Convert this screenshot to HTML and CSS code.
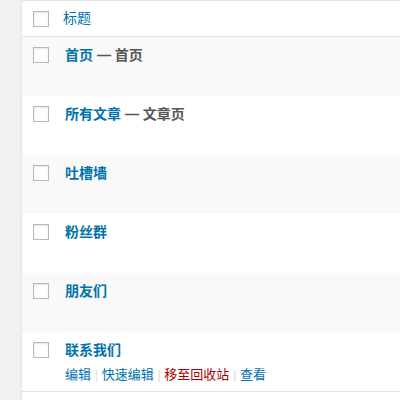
FILE: index.html
```html
<!DOCTYPE html>
<html lang="zh-CN">
<head>
<meta charset="utf-8">
<title>页面</title>
<link rel="stylesheet" href="styles.css">
</head>
<body>
<div class="page">
  <div class="gutter"></div>
  <div class="list">
    <div class="head">
      <div class="check"><input type="checkbox" class="cb"></div>
      <div class="title-col"><a class="sort">标题</a></div>
    </div>
    <div class="row alt">
      <div class="check"><input type="checkbox" class="cb"></div>
      <div class="cell"><strong class="rt"><a>首页</a> — 首页</strong></div>
    </div>
    <div class="row">
      <div class="check"><input type="checkbox" class="cb"></div>
      <div class="cell"><strong class="rt"><a>所有文章</a> — 文章页</strong></div>
    </div>
    <div class="row alt">
      <div class="check"><input type="checkbox" class="cb"></div>
      <div class="cell"><strong class="rt"><a>吐槽墙</a></strong></div>
    </div>
    <div class="row">
      <div class="check"><input type="checkbox" class="cb"></div>
      <div class="cell"><strong class="rt"><a>粉丝群</a></strong></div>
    </div>
    <div class="row alt">
      <div class="check"><input type="checkbox" class="cb"></div>
      <div class="cell"><strong class="rt"><a>朋友们</a></strong></div>
    </div>
    <div class="row">
      <div class="check"><input type="checkbox" class="cb"></div>
      <div class="cell">
        <strong class="rt"><a>联系我们</a></strong>
        <div class="actions"><a>编辑</a> | <a>快速编辑</a> | <a class="trash">移至回收站</a> | <a>查看</a></div>
      </div>
    </div>
    <div class="foot"></div>
  </div>
</div>
</body>
</html>
```
FILE: styles.css
```css
html, body {
  margin: 0;
  padding: 0;
  background: #f1f1f1;
  overflow: hidden;
}
body {
  font-family: "Liberation Sans", "Noto Sans CJK SC", sans-serif;
  font-size: 13px;
  color: #444;
}
.page {
  display: flex;
  width: 400px;
  height: 400px;
}
.gutter {
  width: 21px;
  flex: none;
}
.list {
  flex: 1;
  min-width: 0;
  background: #fff;
  border: 1px solid #e5e5e5;
  border-bottom: none;
  border-right: none;
  box-shadow: 0 1px 1px rgba(0,0,0,.04);
}
.head {
  display: flex;
  height: 35px;
  border-bottom: 1px solid #e1e1e1;
}
.foot {
  border-top: 1px solid #e1e1e1;
  height: 8px;
}
.row {
  display: flex;
  height: 59px;
  background: #fff;
}
.row.alt {
  background: #f9f9f9;
}
.check {
  width: 33px;
  flex: none;
}
.cb {
  appearance: none;
  -webkit-appearance: none;
  display: block;
  box-sizing: border-box;
  width: 16px;
  height: 16px;
  margin: 10px 0 0 11px;
  border: 1px solid #b4b9be;
  background: #fff;
  box-shadow: inset 0 1px 2px rgba(0,0,0,.1);
}
.title-col {
  padding: 8px;
  line-height: 19px;
  font-size: 14px;
}
.sort {
  color: #0073aa;
}
.cell {
  padding: 8px 10px;
}
.rt {
  display: block;
  font-size: 14px;
  line-height: 21px;
  font-weight: bold;
  color: #555;
  margin-bottom: 3px;
}
.rt a {
  color: #0073aa;
}
.actions {
  padding-top: 2px;
  line-height: 17px;
  font-size: 13px;
  color: #ddd;
}
.actions a {
  color: #0073aa;
}
.actions a.trash {
  color: #a00;
}
```
